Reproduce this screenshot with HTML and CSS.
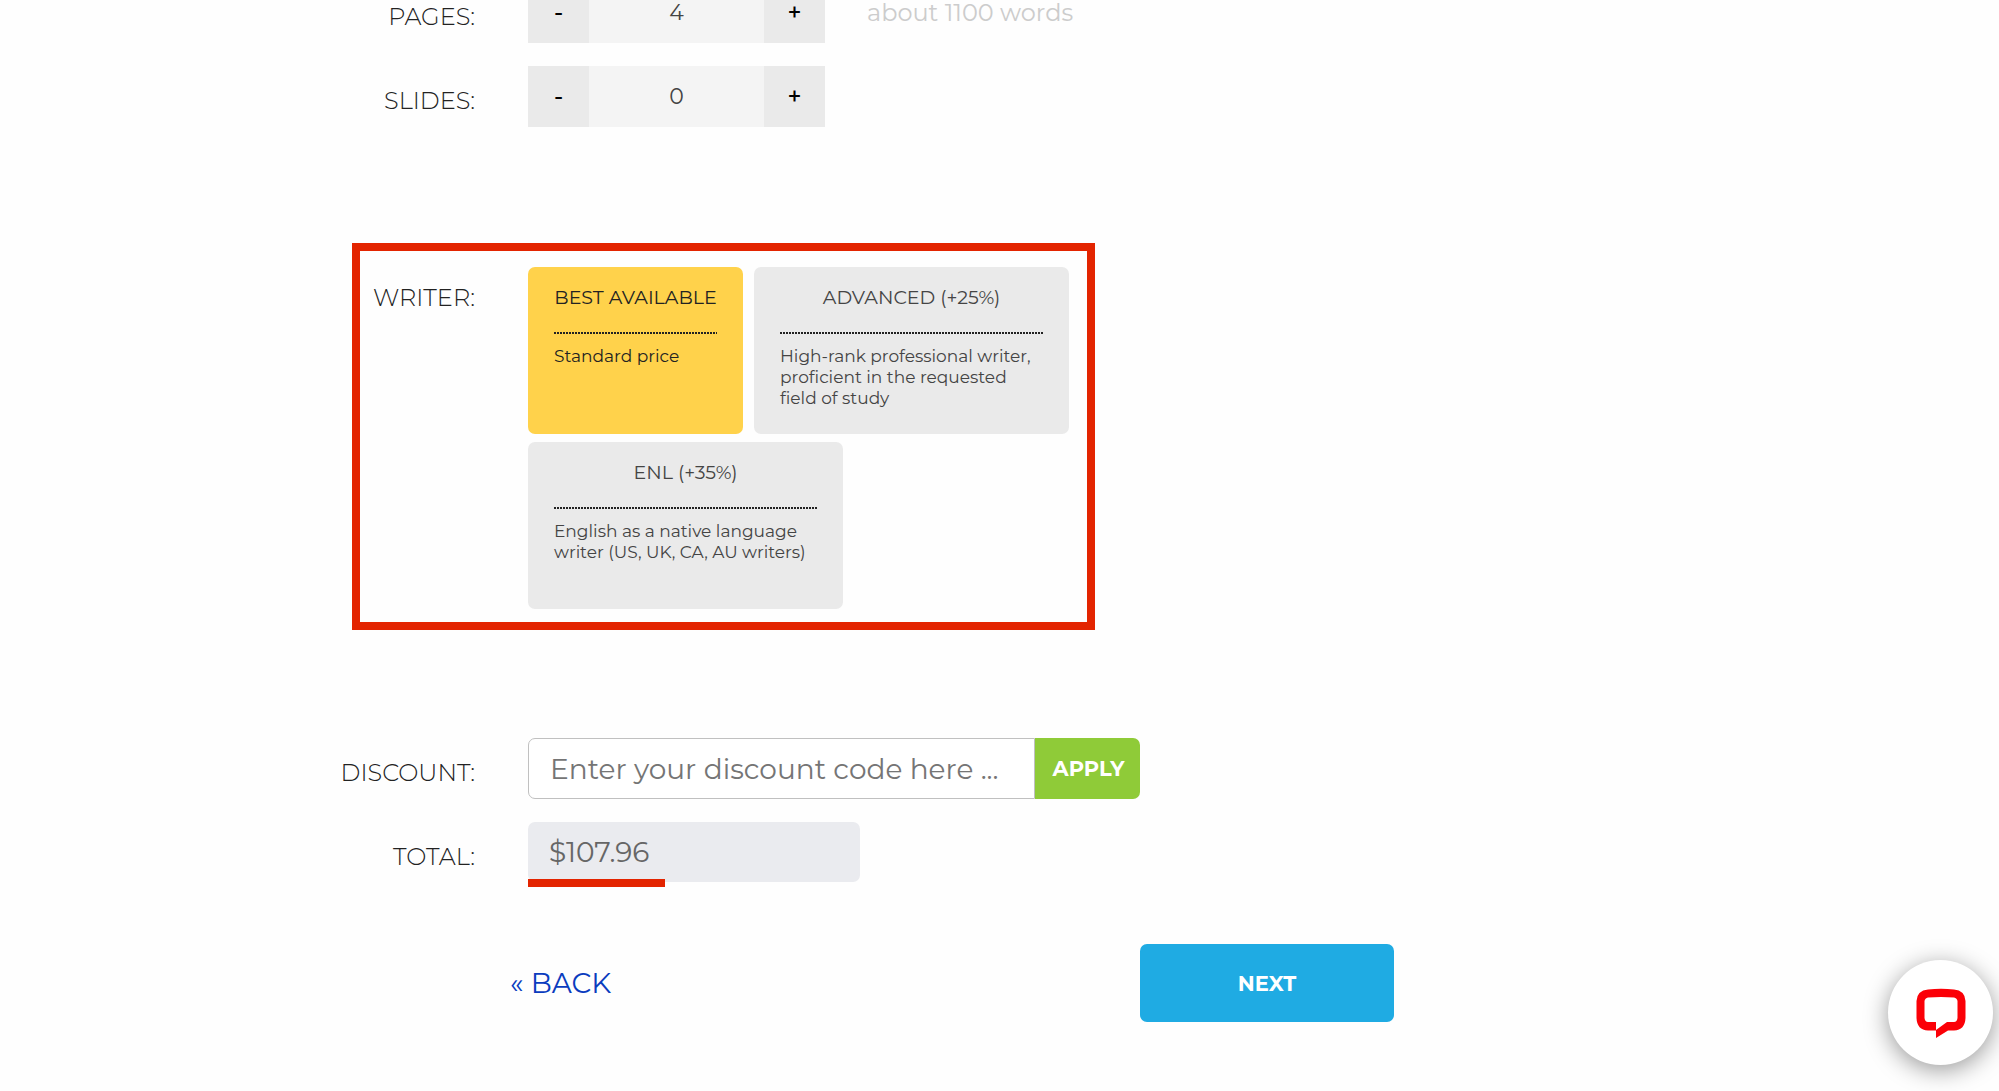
FILE: index.html
```html
<!DOCTYPE html>
<html lang="en">
<head>
    <meta charset="UTF-8">
    <meta name="viewport" content="width=device-width, initial-scale=1.0">
    <title>Order</title>
    <link rel="stylesheet" href="styles.css">
</head>
<body>
    <form class="order-form" onsubmit="event.preventDefault()">
        <div class="row">
            <label class="row-label" for="pages">PAGES:</label>
            <div class="stepper">
                <button type="button" onclick="step('pages', -1)">-</button>
                <input type="text" id="pages" name="pages" value="4">
                <button type="button" onclick="step('pages', 1)">+</button>
            </div>
            <span class="hint">about 1100 words</span>
        </div>

        <div class="row">
            <label class="row-label" for="slides">SLIDES:</label>
            <div class="stepper">
                <button type="button" onclick="step('slides', -1)">-</button>
                <input type="text" id="slides" name="slides" value="0">
                <button type="button" onclick="step('slides', 1)">+</button>
            </div>
        </div>

        <div class="writer" role="radiogroup" aria-labelledby="writer-label">
            <span class="row-label" id="writer-label">WRITER:</span>
            <div class="cards">
                <label class="card card-short">
                    <input type="radio" name="writer" value="best" checked>
                    <span class="card-title">BEST AVAILABLE</span>
                    <span class="card-text">Standard price</span>
                </label>
                <label class="card">
                    <input type="radio" name="writer" value="advanced">
                    <span class="card-title">ADVANCED (+25%)</span>
                    <span class="card-text">High-rank professional writer,<br>proficient in the requested<br>field of study</span>
                </label>
                <label class="card">
                    <input type="radio" name="writer" value="enl">
                    <span class="card-title">ENL (+35%)</span>
                    <span class="card-text">English as a native language<br>writer (US, UK, CA, AU writers)</span>
                </label>
            </div>
        </div>

        <div class="row">
            <label class="row-label" for="discount">DISCOUNT:</label>
            <div class="discount">
                <input type="text" id="discount" name="discount" placeholder="Enter your discount code here ...">
                <button type="button">APPLY</button>
            </div>
        </div>

        <div class="row">
            <label class="row-label" for="total">TOTAL:</label>
            <div class="total">
                <input type="text" id="total" name="total" value="$107.96" readonly>
            </div>
        </div>

        <div class="actions">
            <a class="back" href="#">« BACK</a>
            <button class="next" type="submit">NEXT</button>
        </div>
    </form>

    <button class="chat" type="button" aria-label="Chat">
        <svg width="50" height="50" viewBox="0 0 50 50">
            <path fill="#fb0007" fill-rule="evenodd" d="M12 1.500Q25 0 38 1.500Q49 2.500 49.500 13V30Q49 42 38 42.500H32L20 50V42.500H12Q1 42 .5 30V13Q1 2.500 12 1.500ZM12 9.500Q9 10 8.500 13V30Q9 34 12 34H20V42L31 34H38Q41 34 41.500 30V13Q41 10 38 9.500Q25 8.500 12 9.500Z"/>
        </svg>
    </button>

    <script>
        function step(id, delta) {
            let input = document.getElementById(id);
            input.value = Math.max(0, (parseInt(input.value) || 0) + delta);
        }
    </script>
</body>
</html>
```
FILE: styles.css
```css
* {
    box-sizing: border-box;
}
body {
    margin: 0;
    background: #fefefe;
    color: #444;
    font-family: Montserrat, Inter, sans-serif;
    font-weight: 400;
    font-size: 24px;
}
input, button {
    margin: 0;
    padding: 0;
    border: 0;
    font: inherit;
    color: inherit;
}
button {
    cursor: pointer;
}
.order-form {
    max-width: 1146px;
    margin: -18px 0 0 248px;
}
.row {
    display: flex;
    margin-bottom: 23px;
}
.row-label {
    width: 227px;
    margin-right: 53px;
    padding-top: 8px;
    color: #222;
    font-weight: 300;
    line-height: 53px;
    text-align: right;
}
.stepper {
    display: flex;
    height: 61px;
}
.stepper button {
    width: 61px;
    background: #eaeaea;
    color: #000;
    font-weight: 500;
}
.stepper input {
    width: 175px;
    background: #f4f4f4;
    font-size: 22px;
    text-align: center;
}
.hint {
    margin-left: 42px;
    line-height: 61px;
    color: #ccc;
}

/* writer choice */
.writer {
    display: flex;
    width: 743px;
    margin: 116px 0 108px 104px;
    padding: 16px 0 13px;
    border: 8px solid #e32400;
}
.writer .row-label {
    width: 115px;
    padding-top: 4px;
}
.cards {
    display: flex;
    flex: 1;
    flex-wrap: wrap;
    gap: 8px 11px;
}
.card {
    width: 315px;
    height: 167px;
    padding: 19px 26px;
    border-radius: 7px;
    background: #eaeaea;
    font-size: 17px;
    line-height: 21px;
    cursor: pointer;
}
.card-short {
    width: 215px;
}
.card input {
    position: absolute;
    opacity: 0;
}
.card:has(input:checked) {
    background: #ffd24b;
    color: #222;
}
.card-title {
    display: block;
    height: 48px;
    margin-bottom: 12px;
    background: repeating-linear-gradient(90deg, #222 0 2px, transparent 2px 3px) bottom / 100% 2px no-repeat;
    font-size: 19px;
    line-height: 24px;
    text-align: center;
    white-space: nowrap;
}
.card-text {
    display: block;
    white-space: nowrap;
}

.discount {
    display: flex;
    height: 61px;
    font-size: 28px;
}
.discount input {
    width: 507px;
    padding-left: 21px;
    border: 1px solid #c0c0c0;
    border-radius: 7px 0 0 7px;
}
.discount input::placeholder {
    color: #757575;
}
.discount button {
    width: 105px;
    padding-left: 2px;
    border-radius: 0 7px 7px 0;
    background: #8fcb38;
    color: #fff;
    font-size: 21px;
    font-weight: 700;
}
.total {
    position: relative;
}
.total input {
    width: 332px;
    height: 60px;
    padding-left: 21px;
    border-radius: 7px;
    background: #eaebef;
    color: #666;
    font-size: 28px;
}
/* red underline below the price */
.total::after {
    content: "";
    position: absolute;
    top: 57px;
    left: 0;
    width: 137px;
    height: 8px;
    background: #e32400;
}
.actions {
    display: flex;
    justify-content: space-between;
    align-items: center;
    margin-top: 61px;
    padding-left: 262px;
}
.back {
    color: #0a3cbe;
    font-size: 28px;
    text-decoration: none;
}
.next {
    width: 254px;
    height: 78px;
    border-radius: 7px;
    background: #1fabe3;
    color: #fff;
    font-size: 21px;
    font-weight: 700;
}
.chat {
    position: fixed;
    right: 6px;
    bottom: 26px;
    display: flex;
    align-items: center;
    justify-content: center;
    width: 105px;
    height: 105px;
    border-radius: 50%;
    background: #fff;
    box-shadow: 0 5px 24px rgba(0, 0, 0, 0.4);
}
```
